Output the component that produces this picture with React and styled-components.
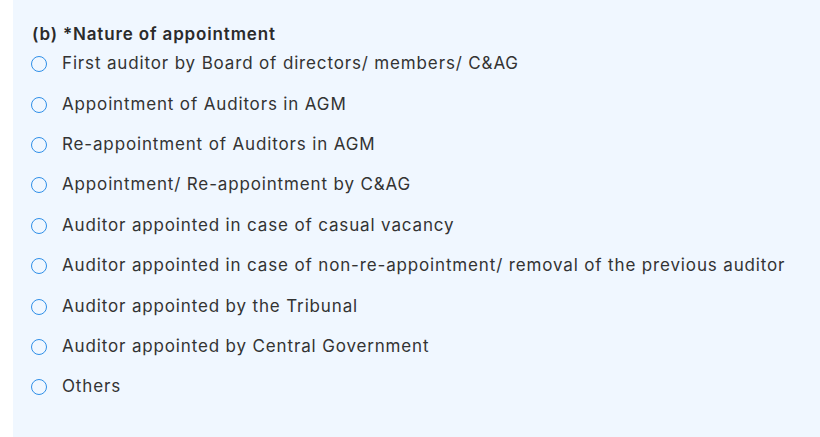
import React from "react";
import styled, { createGlobalStyle } from "styled-components";

const Global = createGlobalStyle`
  html, body {
    margin: 0;
    padding: 0;
    background: #ffffff;
  }
  body {
    font-family: "Inter", "Liberation Sans", sans-serif;
  }
`;

const Page = styled.div`
  padding-left: 13px;
  height: 437px;
  box-sizing: border-box;
`;

const Panel = styled.div`
  background: #f0f7ff;
  height: 100%;
  padding: 24px 0 0 18px;
  box-sizing: border-box;
`;

const Title = styled.div`
  padding-left: 1px;
  font-size: 17px;
  font-weight: 600;
  letter-spacing: 0.85px;
  color: #2b2b2b;
  line-height: 20px;
  white-space: nowrap;
`;

const Options = styled.div`
  display: flex;
  flex-direction: column;
  margin-top: -1px;
`;

const Option = styled.label`
  display: flex;
  align-items: center;
  gap: 15px;
  height: 40.4px;
  font-size: 17px;
  letter-spacing: 0.85px;
  color: #333333;
  white-space: nowrap;
  cursor: pointer;
`;

const Radio = styled.span`
  width: 16px;
  height: 16px;
  border: 1.5px solid #2f8fe8;
  border-radius: 50%;
  box-sizing: border-box;
  flex-shrink: 0;
  margin-top: 2px;
`;

const options = [
  "First auditor by Board of directors/ members/ C&AG",
  "Appointment of Auditors in AGM",
  "Re-appointment of Auditors in AGM",
  "Appointment/ Re-appointment by C&AG",
  "Auditor appointed in case of casual vacancy",
  "Auditor appointed in case of non-re-appointment/ removal of the previous auditor",
  "Auditor appointed by the Tribunal",
  "Auditor appointed by Central Government",
  "Others",
];

const App = () => {
  return (
    <Page>
      <Global />
      <Panel>
        <Title>(b) *Nature of appointment</Title>
        <Options>
          {options.map((text) => (
            <Option key={text}>
              <Radio />
              {text}
            </Option>
          ))}
        </Options>
      </Panel>
    </Page>
  );
};

export default App;
